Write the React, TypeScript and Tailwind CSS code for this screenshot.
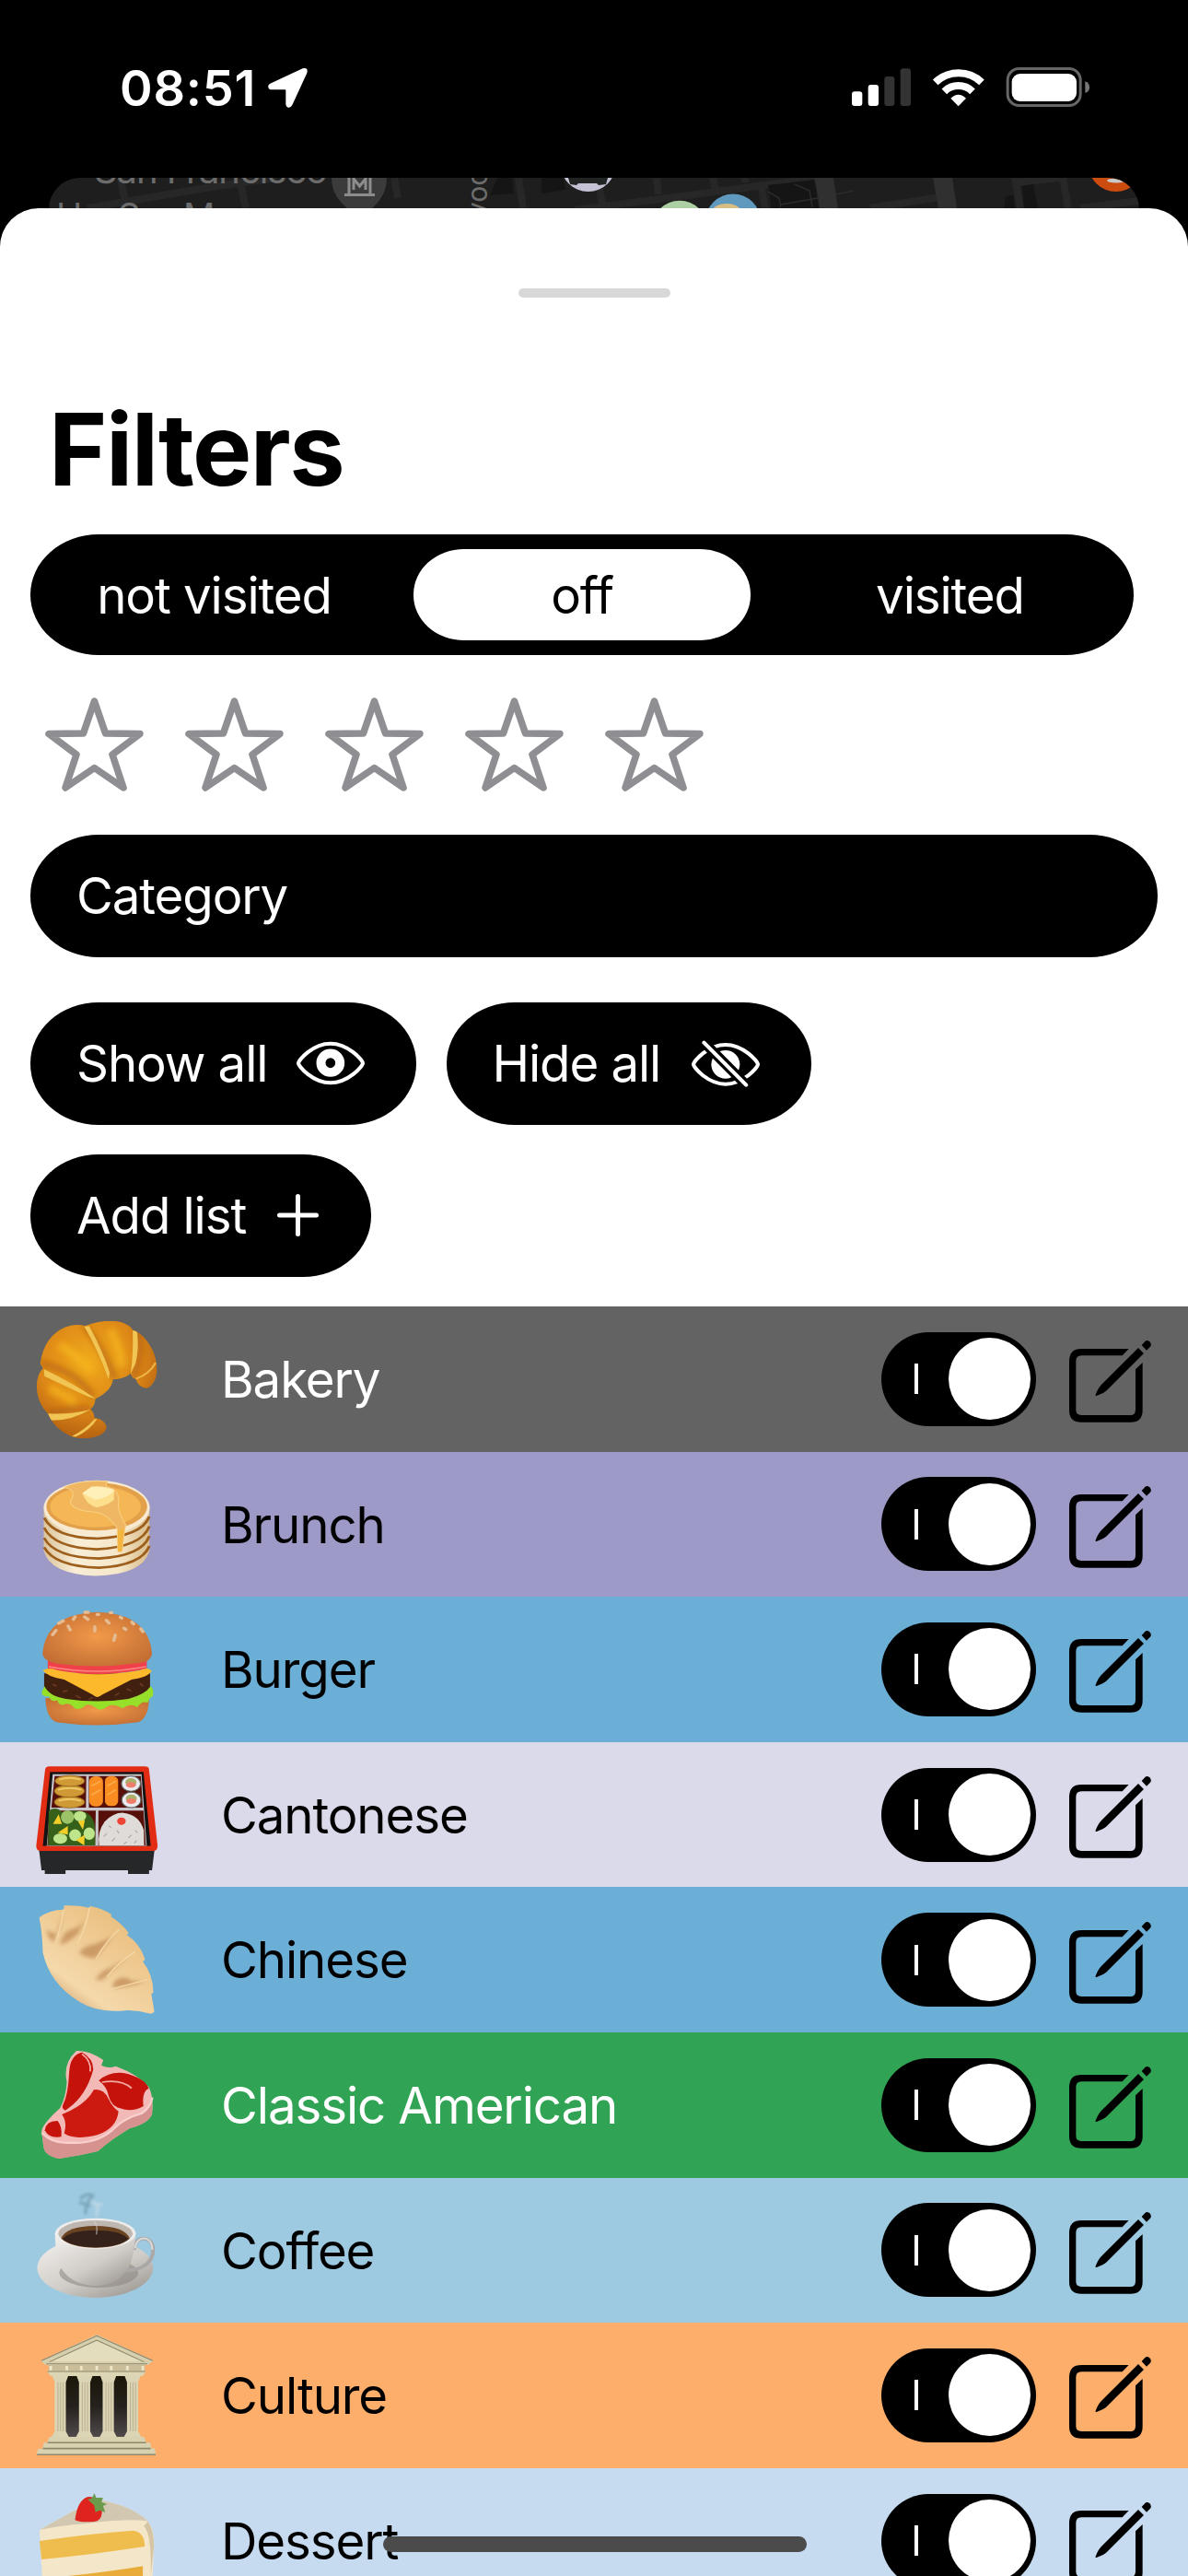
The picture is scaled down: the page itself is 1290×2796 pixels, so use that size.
import React, { useState } from 'react';

interface Category {
  name: string;
  row: string;
  icon: React.ReactNode;
}

const Glyph: React.FC<{ top: number; children: React.ReactNode }> = ({ top, children }) => (
  <svg className="w-[140px] h-full shrink-0" viewBox={`95 ${top} 392 473`} preserveAspectRatio="none">
    {children}
  </svg>
);

const Croissant = () => (
  <Glyph top={55}>
    <defs>
      <radialGradient id="crust" cx="0.45" cy="0.35" r="0.65">
        <stop offset="0" stopColor="#f0a91c" />
        <stop offset="0.6" stopColor="#dc8717" />
        <stop offset="1" stopColor="#b05c10" />
      </radialGradient>
      <filter id="crustSoft">
        <feGaussianBlur stdDeviation="9" />
      </filter>
      <clipPath id="crustClip">
        <path d="M122 240 Q135 150 200 122 Q230 110 258 118 Q320 95 368 106 Q395 115 404 132 Q440 145 465 200 Q478 235 477 268 Q472 310 448 321 Q422 322 413 292 Q402 290 397 274 Q375 292 343 293 Q340 330 290 356 Q288 380 275 390 Q287 404 287 418 Q318 422 324 448 Q318 480 260 485 Q235 486 215 478 Q165 455 145 404 Q112 370 111 310 Q114 275 130 257 Z" />
      </clipPath>
    </defs>
    <g clipPath="url(#crustClip)">
      <rect x="95" y="90" width="392" height="410" fill="url(#crust)" />
      <g filter="url(#crustSoft)" fill="none" strokeWidth="20">
        <path d="M122 240 Q230 262 283 350 M256 118 Q315 190 350 293 M145 400 Q220 390 275 385 M414 134 Q440 200 405 290" stroke="#ad5a0d" opacity="0.6" />
        <path d="M180 180 Q240 220 280 270 M335 130 Q365 190 370 250 M150 320 L230 365" stroke="#f8b820" opacity="0.7" strokeWidth="26" />
      </g>
      <g fill="#f0c553">
        <path d="M256 120 L271 119 Q312 200 333 270 L330 293 Q300 200 256 120Z" />
        <path d="M403 134 L416 134 Q424 190 412 240 L397 274 Q406 200 403 134Z" />
        <path d="M133 259 L135 282 Q210 320 270 350 L290 355 Q230 310 133 259Z" />
        <path d="M145 404 Q210 408 275 391 Q210 430 153 425Z" />
        <path d="M218 478 Q260 456 287 422 L295 422 Q272 460 230 480Z" />
      </g>
      <path d="M413 291 Q455 275 473 238" stroke="#eeb448" strokeWidth="6" fill="none" />
    </g>
  </Glyph>
);

const Pancakes = () => (
  <Glyph top={528}>
    <defs>
      <linearGradient id="stack" x1="0" y1="0" x2="1" y2="0">
        <stop offset="0" stopColor="#dcc59c" />
        <stop offset="0.3" stopColor="#f8edd6" />
        <stop offset="0.7" stopColor="#f5e7ca" />
        <stop offset="1" stopColor="#d9bd8d" />
      </linearGradient>
    </defs>
    <path d="M133 700 V850 Q150 925 290 932 Q435 928 454 850 V700Z" fill="url(#stack)" />
    <g fill="none" stroke="#9d5f1b" strokeWidth="8">
      <path d="M134 742 Q165 806 293 810 Q430 804 454 738" />
      <path d="M134 775 Q165 840 293 845 Q430 838 454 770" />
      <path d="M134 808 Q165 872 300 875 Q430 868 454 802" />
      <path d="M134 838 Q165 900 300 905 Q430 898 454 834" />
    </g>
    <ellipse cx="294" cy="710" rx="161" ry="90" fill="#f7ead0" />
    <ellipse cx="294" cy="706" rx="153" ry="78" fill="#e3a04a" />
    <ellipse cx="290" cy="706" rx="138" ry="67" fill="#f5b755" />
    <path d="M196 643 Q240 618 327 624 L322 638 Q365 655 360 690 Q355 720 382 765 L378 790 L371 850 Q362 858 358 850 L356 775 Q325 728 290 724 Q220 720 213 690 Q230 665 215 650Z" fill="#efb763" stroke="#f8cf83" strokeWidth="3" />
    <path d="M358 785 L377 775 L371 850 Q362 856 358 850Z" fill="#f3b640" />
    <path d="M250 662 L278 641 Q320 638 347 652 L346 684 Q330 700 293 709 Q262 698 250 662Z" fill="#fddf8e" />
    <path d="M250 662 L278 641 Q320 638 347 652 Q335 676 290 684Z" fill="#fff0b9" />
  </Glyph>
);

const Burger = () => (
  <Glyph top={1000}>
    <defs>
      <radialGradient id="bun" cx="0.5" cy="0.45" r="0.6">
        <stop offset="0" stopColor="#f19a4a" />
        <stop offset="1" stopColor="#c46e34" />
      </radialGradient>
    </defs>
    <path d="M138 1330 Q140 1400 175 1410 Q295 1428 420 1409 Q452 1395 453 1330Z" fill="url(#bun)" />
    <path d="M134 1250 H456 V1300 Q440 1340 295 1345 Q150 1340 134 1300Z" fill="#42200f" />
    <path d="M160 1285 L172 1292 M190 1310 L205 1306 M230 1322 L245 1330 M350 1322 L362 1314 M385 1300 L400 1308 M425 1282 L435 1292 M270 1335 L282 1328" stroke="#6b3a22" strokeWidth="5" />
    <path d="M135 1292 Q150 1325 200 1333 Q295 1348 390 1333 Q440 1320 458 1292 Q470 1305 464 1326 Q455 1326 449 1345 Q430 1338 417 1360 Q395 1345 372 1364 Q345 1348 327 1357 Q310 1372 297 1366 Q278 1350 263 1352 Q245 1370 228 1365 Q215 1347 200 1349 Q180 1360 174 1338 Q155 1345 148 1325 Q125 1328 127 1310Z" fill="#96e02a" />
    <path d="M145 1205 H446 V1235 Q295 1270 145 1235Z" fill="#f0404a" />
    <path d="M148 1228 Q295 1258 444 1228" stroke="#ff8583" strokeWidth="5" fill="none" />
    <path d="M130 1240 Q150 1228 175 1240 Q295 1265 425 1240 Q450 1228 461 1242 Q450 1262 400 1270 L310 1320 Q295 1334 282 1320 L195 1270 Q145 1262 130 1240Z" fill="#fbb92b" />
    <path d="M129 1185 Q140 1055 295 1050 Q452 1055 462 1185 Q458 1215 415 1217 Q295 1236 175 1218 Q132 1210 129 1185Z" fill="url(#bun)" />
    <g stroke="#e5bb92" strokeWidth="10" strokeLinecap="round">
      <path d="M178 1087 L192 1079 M160 1124 L170 1110 M207 1096 L213 1108 M223 1074 L228 1066 M257 1066 L267 1074 M288 1098 V1112 M323 1077 L331 1086 M350 1126 L346 1142 M377 1103 L382 1107 M401 1083 L406 1089 M428 1105 L434 1114 M258 1051 H268 M335 1052 H340 M366 1067 L370 1070 M295 1058 H300" />
    </g>
  </Glyph>
);

const Bento = () => (
  <Glyph top={33}>
    <path d="M118 380 H470 L462 450 H453 V462 H389 V450 H199 V462 H136 V450 H126Z" fill="#252728" />
    <path d="M150 112 H440 Q452 112 453 122 L479 370 Q478 387 468 387 H120 Q110 385 110 370 L137 122 Q139 112 150 112Z" fill="#e22d14" />
    <path d="M152 130 H436 L458 371 H130Z" fill="#141212" />
    <path d="M160 137 H430 L446 371 H142Z" fill="#c8c6cc" />
    <path d="M166 143 H262 L261 246 H156Z M270 143 H428 L434 246 H270Z M150 256 H291 L289 369 H144Z M299 256 H436 L443 369 H299Z" fill="#571009" />
    <g fill="#cf9a35" stroke="#8a5c16" strokeWidth="2">
      <ellipse cx="211" cy="228" rx="46" ry="19" />
      <ellipse cx="211" cy="192" rx="46" ry="20" />
      <ellipse cx="212" cy="159" rx="45" ry="18" />
    </g>
    <path d="M180 155 Q210 143 245 155 M176 188 Q210 176 248 188 M178 224 Q210 212 246 224" stroke="#edc869" strokeWidth="6" fill="none" />
    <rect x="271" y="144" width="42" height="98" rx="17" fill="#f98d22" />
    <rect x="319" y="143" width="40" height="98" rx="17" fill="#f98d22" />
    <path d="M278 175 L306 160 M278 205 L306 188 M326 175 L352 160 M326 205 L352 188" stroke="#ffb04e" strokeWidth="4" />
    <g fill="#eceaf0" stroke="#59675f" strokeWidth="3">
      <ellipse cx="398" cy="168" rx="29" ry="25" />
      <ellipse cx="399" cy="221" rx="29" ry="25" />
    </g>
    <ellipse cx="398" cy="163" rx="17" ry="13" fill="#a9b16b" />
    <ellipse cx="398" cy="172" rx="15" ry="9" fill="#ec7e6a" />
    <ellipse cx="399" cy="216" rx="17" ry="13" fill="#a9b16b" />
    <ellipse cx="399" cy="225" rx="15" ry="9" fill="#ec7e6a" />
    <path d="M148 256 Q170 240 190 262 Q220 250 262 262 Q290 280 289 320 L289 369 H146Z" fill="#36611b" />
    <g fill="#bfe58c">
      <ellipse cx="205" cy="277" rx="20" ry="22" fill="#9cc367" />
      <ellipse cx="243" cy="274" rx="19" ry="17" />
      <ellipse cx="228" cy="336" rx="18" ry="19" />
      <ellipse cx="271" cy="331" rx="17" ry="20" />
      <ellipse cx="183" cy="347" rx="21" ry="17" />
    </g>
    <path d="M161 299 L178 268 L188 299Z M175 328 L206 306 V334Z M237 291 L258 286 L252 318Z M231 352 L257 335 L256 369Z" fill="#f3ce28" />
    <path d="M301 369 Q295 325 318 292 Q345 262 375 263 Q425 270 437 320 L438 369Z" fill="#dedbd9" />
    <path d="M315 340 L325 330 M340 355 L350 345 M355 320 L362 330 M390 345 L400 335 M410 320 L418 328 M330 305 L338 312 M375 365 L385 358 M408 362 L415 353" stroke="#aaa7a7" strokeWidth="3" />
    <ellipse cx="369" cy="290" rx="13" ry="12" fill="#ee4435" />
  </Glyph>
);

const Dumpling = () => (
  <Glyph top={506}>
    <defs>
      <linearGradient id="dough" x1="0.1" y1="1" x2="0.8" y2="0.1">
        <stop offset="0" stopColor="#c08a52" />
        <stop offset="0.3" stopColor="#f5d9ab" />
        <stop offset="1" stopColor="#e9bd7d" />
      </linearGradient>
      <filter id="doughSoft">
        <feGaussianBlur stdDeviation="6" />
      </filter>
    </defs>
    <path d="M119 606 Q150 580 193 580 L195 567 Q235 565 272 574 L273 568 Q310 575 339 596 L337 603 Q370 625 391 656 L386 663 Q425 690 441 742 L434 750 Q465 790 466 850 L460 855 L469 912 Q465 920 455 919 Q420 907 385 908 Q300 920 240 880 Q150 820 130 720 Q128 650 119 606Z" fill="url(#dough)" />
    <g fill="#b9804c" opacity="0.65" filter="url(#doughSoft)">
      <path d="M190 595 Q178 630 165 685 Q145 680 140 640 Q155 665 180 650Z" />
      <path d="M265 600 Q250 630 236 660 Q205 690 182 695 Q190 655 215 645 Q245 640 265 600Z" />
      <path d="M345 665 Q315 700 292 738 Q260 740 240 720 Q260 695 290 692 Q320 680 345 665Z" />
      <path d="M400 730 Q355 760 322 800 Q305 815 290 808 Q305 780 335 770Z" />
      <path d="M440 815 Q400 830 345 836 Q335 820 360 805 Q385 795 400 812Z" />
    </g>
    <path d="M193 580 Q185 640 168 690 M272 574 Q262 635 236 690 M362 645 Q325 680 292 740 M410 718 Q360 750 325 800 M448 808 Q400 822 335 840" stroke="#f5d8a6" strokeWidth="4" fill="none" />
  </Glyph>
);

const Steak = () => (
  <Glyph top={978}>
    <path d="M232 1038 Q270 1035 314 1068 L308 1085 Q330 1098 352 1088 Q420 1115 452 1155 Q468 1190 462 1245 Q450 1275 395 1290 Q340 1325 297 1365 Q240 1380 180 1389 Q135 1380 132 1350 L126 1300 Q130 1275 182 1225 Q200 1190 203 1140 Q190 1080 232 1038Z" fill="#f2b9b6" />
    <path d="M127 1305 Q160 1340 215 1335 Q300 1340 350 1285 Q380 1255 430 1240 Q462 1215 462 1185 V1245 Q450 1275 395 1290 Q340 1325 297 1365 Q240 1380 180 1389 Q135 1380 132 1350Z" fill="#cb8581" opacity="0.75" />
    <path d="M127 1305 Q160 1342 215 1337 Q300 1342 350 1287 Q380 1257 430 1242 Q458 1222 463 1190" stroke="#f8cfcc" strokeWidth="7" fill="none" />
    <path d="M210 1110 Q212 1050 250 1043 Q285 1065 283 1100 Q260 1190 198 1232 Q185 1225 192 1212 Q207 1180 210 1110Z" fill="#c5130b" />
    <path d="M300 1135 Q330 1105 375 1110 Q440 1125 452 1160 Q430 1170 436 1218 Q400 1240 365 1225 Q340 1220 330 1185 Q325 1155 300 1135Z" fill="#c5130b" />
    <path d="M188 1245 Q260 1215 285 1165 Q315 1160 330 1195 Q340 1220 360 1235 Q355 1290 295 1312 Q225 1330 195 1307 Q205 1270 188 1245Z" fill="#cc1a10" />
    <path d="M136 1297 Q140 1265 175 1266 Q190 1285 186 1318 Q150 1325 136 1297Z" fill="#c5130b" />
    <path d="M249 1048 Q278 1070 274 1105 M310 1140 Q370 1130 400 1160" stroke="#f2aaa4" strokeWidth="5" fill="none" />
  </Glyph>
);

const Coffee = () => (
  <Glyph top={41}>
    <defs>
      <linearGradient id="cup" x1="0" y1="0" x2="0.8" y2="1">
        <stop offset="0" stopColor="#f2f0ee" />
        <stop offset="0.6" stopColor="#d1cdc8" />
        <stop offset="1" stopColor="#9e9993" />
      </linearGradient>
      <filter id="steam">
        <feGaussianBlur stdDeviation="4" />
      </filter>
    </defs>
    <g filter="url(#steam)" fill="none">
      <path d="M243 110 Q262 88 282 98 Q258 125 260 160 M240 120 L275 132" stroke="#6f98ac" strokeWidth="10" opacity="0.7" />
      <path d="M278 118 Q308 130 290 165 M285 125 L312 128" stroke="#c5dbe5" strokeWidth="8" opacity="0.8" />
    </g>
    <ellipse cx="289" cy="334" rx="176" ry="97" fill="url(#cup)" />
    <ellipse cx="300" cy="350" rx="120" ry="48" fill="#88837e" opacity="0.55" />
    <path d="M408 275 Q412 235 440 238 Q470 245 464 290 Q450 340 385 342" stroke="#a9a8a6" strokeWidth="11" fill="none" />
    <path d="M410 270 Q415 238 438 237 Q462 240 463 275" stroke="#dfdddb" strokeWidth="5" fill="none" />
    <path d="M167 220 Q168 320 200 355 Q235 392 290 392 Q350 390 380 350 Q408 315 412 220Z" fill="url(#cup)" />
    <ellipse cx="290" cy="222" rx="123" ry="50" fill="#efedeb" />
    <ellipse cx="290" cy="222" rx="113" ry="43" fill="#bdb7b0" />
    <path d="M186 238 Q200 198 290 197 Q380 198 394 238 Q365 267 290 268 Q215 267 186 238Z" fill="#6a4320" />
    <path d="M190 240 Q210 212 290 211 Q370 212 390 240 Q360 266 290 267 Q220 266 190 240Z" fill="#35221b" />
    <path d="M285 180 Q298 195 293 225" stroke="#d5d0ca" strokeWidth="4" fill="none" opacity="0.6" />
  </Glyph>
);

const Temple = () => (
  <Glyph top={514}>
    <defs>
      <linearGradient id="hall" x1="0" y1="0" x2="0" y2="1">
        <stop offset="0" stopColor="#1a1608" />
        <stop offset="0.5" stopColor="#25211d" />
        <stop offset="1" stopColor="#504a4c" />
      </linearGradient>
    </defs>
    <rect x="180" y="686" width="225" height="200" fill="url(#hall)" />
    <path d="M294 553 L466 638 L450 652 H138 L124 638Z" fill="#d6cfae" />
    <path d="M294 572 L430 640 H158Z" fill="#e3dcbd" />
    <path d="M126 638 L294 557 L464 638 M150 642 L294 571 L438 642" stroke="#8a8468" strokeWidth="3" fill="none" />
    <rect x="148" y="652" width="292" height="20" fill="#c9bd9a" />
    <path d="M154 655 V669 M203 655 V669 M247 655 V669 M294 655 V669 M338 655 V669 M387 655 V669 M434 655 V669" stroke="#eee7c8" strokeWidth="8" />
    <path d="M142 671 H444 L434 688 H154Z" fill="#ddd6b5" />
    <path d="M140 648 H448 M144 673 H442" stroke="#8a8468" strokeWidth="3" />
    {[183, 257, 329, 403].map((x) => (
      <g key={x}>
        <path d={`M${x - 24} 688 H${x + 24} L${x + 17} 708 V868 L${x + 26} 886 H${x - 26} L${x - 17} 868 V708Z`} fill="#dcd5b5" />
        <path d={`M${x - 7} 708 V868 M${x + 1} 708 V868 M${x + 9} 708 V868`} stroke="#b1aa88" strokeWidth="2.5" />
      </g>
    ))}
    <path d="M150 886 H438 L444 905 H456 L460 924 H470 L474 946 H110 L116 925 H128 L134 905 H143Z" fill="#d9d2b0" />
    <path d="M144 905 H444 M130 924 H458 M112 944 H473" stroke="#8d876b" strokeWidth="5" />
  </Glyph>
);

const Shortcake = () => (
  <Glyph top={987}>
    <path d="M120 1188 L225 1125 L310 1092 Q400 1110 450 1160 Q470 1190 468 1240 L458 1460 H134Z" fill="#f4e6c8" />
    <path d="M120 1188 L225 1125 L310 1092 Q400 1110 450 1160 Q400 1150 270 1166 Q170 1175 120 1188Z" fill="#d2c8b1" />
    <path d="M120 1224 Q270 1200 405 1190 Q440 1195 440 1242 Q270 1270 126 1284Z" fill="#efbd4d" />
    <path d="M130 1346 Q300 1330 434 1306 V1460 H135Z" fill="#e9ac39" />
    <path d="M437 1175 Q462 1200 458 1338 L468 1240 Q468 1190 450 1160Z" fill="#d5c5a5" />
    <path d="M228 1155 Q235 1090 268 1080 Q305 1080 310 1130 Q308 1160 285 1161 Q240 1165 228 1155Z" fill="#df241f" />
    <path d="M266 1088 L278 1086 L287 1069 L292 1083 L313 1083 L308 1097 L325 1104 L313 1110 L320 1131 L303 1124 L290 1130 L286 1108Z" fill="#6c9a4c" />
  </Glyph>
);

const categories: Category[] = [
  { name: 'Bakery', row: 'bg-[#636363] text-white', icon: <Croissant /> },
  { name: 'Brunch', row: 'bg-[#9e9ac8] text-black', icon: <Pancakes /> },
  { name: 'Burger', row: 'bg-[#6baed6] text-black', icon: <Burger /> },
  { name: 'Cantonese', row: 'bg-[#dadaeb] text-black', icon: <Bento /> },
  { name: 'Chinese', row: 'bg-[#6baed6] text-black', icon: <Dumpling /> },
  { name: 'Classic American', row: 'bg-[#31a354] text-white', icon: <Steak /> },
  { name: 'Coffee', row: 'bg-[#9ecae1] text-black', icon: <Coffee /> },
  { name: 'Culture', row: 'bg-[#fdae6b] text-black', icon: <Temple /> },
  { name: 'Dessert', row: 'bg-[#c6dbef] text-black', icon: <Shortcake /> },
];

const StatusBar = () => (
  <header className="h-[193px] shrink-0 flex justify-between pt-[73px] pl-[130px] pr-[107px] text-white">
    <div className="flex h-[45px]">
      <span className="w-[161px] text-[54px] leading-[45px] font-semibold tracking-[0.8px]">08:51</span>
      <svg className="w-[43px] h-[43px] mt-px" viewBox="753 43 129 129" fill="currentColor">
        <path d="M866 44 L760 93 Q752 97 754 105 Q756 113 765 113 H808 Q811 113 811 116 V160 Q812 171 821 171 Q828 171 832 163 L880 59 Q885 39 866 44Z" />
      </svg>
    </div>
    <svg className="w-[258px] h-[43px]" viewBox="106 39 774 129" fill="#fff">
      <rect x="106" y="118" width="34" height="47" rx="9" />
      <rect x="159" y="96" width="34" height="69" rx="9" />
      <rect x="212" y="69" width="33" height="96" rx="9" fill="#333" />
      <rect x="264" y="43" width="34" height="122" rx="9" fill="#333" />
      <path d="M378 88 A109 109 0 0 1 529 88 M407 118 A66 66 0 0 1 499 118" stroke="#fff" strokeWidth="24" fill="none" />
      <path d="M453 166 L428 140 Q453 116 478 140Z" />
      <rect x="613.500" y="43.500" width="237" height="120" rx="37" fill="none" stroke="#666" strokeWidth="9" />
      <rect x="627" y="60" width="211" height="90" rx="27" />
      <path d="M866 85 Q880 90 880 104 Q880 118 866 123Z" fill="#777" />
    </svg>
  </header>
);

// strip of the map that peeks out above the sheet
const MapPeek = () => (
  <div className="h-[72px] shrink-0 mx-[53px] -mb-[39.500px] rounded-t-[34px] overflow-hidden bg-[#1e1e1e]">
    <svg className="w-[1184px] h-[72px]" viewBox="53 193 1184 72" fontFamily="Inter, sans-serif">
      <g fill="none" stroke="#272727" strokeWidth="8">
        <path d="M95 226 L230 203 L300 193 M131 193 L136 220 M261 199 L267 226 M428 193 L432 215 M563 193 L568 226 M650 200 L655 226 M625 228 L860 197 L900 193 M713 193 L715 211 M774 193 L778 211 M809 193 V198 M827 205 L831 226 M945 226 L1020 214 M1102 193 L1108 226 M1105 198 L1150 193 M1154 193 L1160 226 M1173 226 L1237 218" />
      </g>
      <path d="M540 193 L556 193 L558 210 L532 212Z M588 193 H612 L614 206 L588 210Z M834 201 L884 195 L889 226 H838Z M1092 213 L1100 212 L1102 226 H1090Z M1110 202 L1122 200 L1127 226 H1112Z" fill="#151515" />
      <path d="M885 193 H905 L910 226 H890Z M1013 193 H1034 L1039 226 H1019Z" fill="#303030" />
      <path d="M834 208 L846 215 L848 225 M863 200 L879 207 L882 225 M848 222 L888 215 M908 211 L927 207" stroke="#2b2b2b" strokeWidth="1.500" fill="none" />
      <text x="102" y="198.500" fontSize="40" fill="#6c6c6c" textLength="254">San Francisco</text>
      <g fontSize="38" fill="#6c6c6c">
        <text x="61" y="248">H</text>
        <text x="128" y="248">S</text>
        <text x="199" y="248">M</text>
      </g>
      <path d="M360 193 Q360 212 377 226 H404 Q420 212 420 193Z" fill="#3b3b3b" />
      <path d="M374 211.500 H407 M379 193 V210 M402 193 V210 M384 206 V194 L390.500 202 L397 194 V206" stroke="#8c8c8c" strokeWidth="3" fill="none" />
      <text transform="translate(529 236) rotate(-90)" fontSize="30" fill="#6c6c6c">voo</text>
      <circle cx="638.700" cy="178" r="30" fill="#c4c2d4" />
      <path d="M617 193 H660 L658 200 L650 201 L648 199 H628 L626 201 L619 200Z" fill="#202422" />
      <circle cx="738" cy="247.700" r="30" fill="#acd0a4" />
      <circle cx="796" cy="240.500" r="30" fill="#6099be" />
      <ellipse cx="789" cy="229" rx="15" ry="8" fill="#d9bd82" />
      <circle cx="1211.700" cy="178" r="30" fill="#cc4b0e" />
      <ellipse cx="1212" cy="196" rx="10" ry="2.500" fill="#c9c9c9" />
    </svg>
  </div>
);

const Star = () => (
  <svg className="w-[107px] h-[102px]" viewBox="0 0 107 102" fill="none" stroke="#8e8e93" strokeWidth="7.500" strokeLinejoin="round">
    <path d="M53.500 4 L65.500 39 L103 39.500 L73 62 L85 98 L53.500 76.500 L22 98 L34 62 L4 39.500 L41.500 39Z" />
  </svg>
);

const EyeIcon = () => (
  <svg className="w-[74px] h-[48px]" viewBox="64 120 215 144" preserveAspectRatio="none" fill="none" stroke="#fff">
    <path d="M70 192 C70 182 115 128 171 128 C227 128 273 182 273 192 C273 202 227 256 171 256 C115 256 70 202 70 192Z" strokeWidth="12" />
    <ellipse cx="171" cy="191" rx="30" ry="31" strokeWidth="29" />
  </svg>
);

const EyeOffIcon = () => (
  <svg className="w-[74px] h-[51px]" viewBox="1309 116 215 153" preserveAspectRatio="none" fill="none" stroke="#fff">
    <path d="M1315 195 C1315 185 1360 131 1416 131 C1472 131 1518 185 1518 195 C1518 205 1472 259 1416 259 C1360 259 1315 205 1315 195Z" strokeWidth="12" />
    <ellipse cx="1416" cy="195" rx="45" ry="46" fill="#fff" stroke="none" />
    <path d="M1335 110 L1495 276" stroke="#000" strokeWidth="32" />
    <path d="M1348 124 L1481 262" strokeWidth="12" strokeLinecap="round" />
  </svg>
);

const PlusIcon = () => (
  <svg className="w-[45px] h-[46px]" viewBox="0 0 45 46" stroke="#fff" strokeWidth="5" strokeLinecap="round">
    <path d="M2.500 23 H42.500 M22.500 2.500 V43.500" />
  </svg>
);

const EditIcon = () => (
  <svg className="w-[89px] h-[89px]" viewBox="783 168 267 267">
    <path d="M977 195 H823 Q783 195 783 235 V395 Q783 434 823 434 H983 Q1022 434 1022 395 V240 L999 262 V393 Q999 411 983 411 H823 Q805 411 805 394 V235 Q805 217 823 217 H956Z" />
    <path d="M1008 192 L1026 210 L905 331 Q895 340 872 348 Q867 349 869 344 Q877 323 887 313Z" />
    <path d="M1019 183 L1030 171 Q1036 165 1045 172 Q1053 182 1047 188 L1035 200Z" />
  </svg>
);

const Toggle: React.FC<{ on: boolean; onClick: () => void }> = ({ on, onClick }) => (
  <button
    onClick={onClick}
    className={`w-[168px] h-[102px] rounded-full bg-black flex items-center justify-between pr-[6.500px] pl-[36px] ${on ? '' : 'flex-row-reverse'}`}
  >
    <span className="w-1 h-[33px] bg-white" />
    <span className="size-[89px] rounded-full bg-white" />
  </button>
);

const App: React.FC = () => {
  const [hidden, setHidden] = useState<Set<string>>(new Set());

  const toggle = (name: string) => {
    const next = new Set(hidden);
    if (next.has(name)) next.delete(name);
    else next.add(name);
    setHidden(next);
  };

  return (
    <div className="relative w-[1290px] h-[2796px] overflow-hidden flex flex-col bg-black font-['Inter',sans-serif]">
      <StatusBar />
      <MapPeek />
      <main className="relative flex-1 min-h-0 overflow-hidden flex flex-col rounded-t-[42px] bg-white text-[54.600px] leading-none tracking-[-1.1px]">
        <div className="w-[165px] h-[10px] shrink-0 mt-[87.500px] self-center rounded-full bg-[#d8d8d8]" />
        <h1 className="mt-[111px] ml-[53px] text-[108px] leading-[108px] font-bold tracking-[-1.500px]">Filters</h1>

        <div className="mt-[38px] ml-[33px] w-[1198px] h-[131px] shrink-0 flex items-center rounded-[74px/65.500px] bg-black text-white">
          <button className="w-[416px] pt-[2px] pr-[17px]">not visited</button>
          <button className="w-[366px] h-[98.500px] pt-[2px] rounded-[55px/49px] bg-white text-black">off</button>
          <button className="w-[416px] pt-[2px] pl-[17px]">visited</button>
        </div>

        <div className="mt-[46px] ml-[48.500px] flex gap-[45px]">
          {[1, 2, 3, 4, 5].map((n) => (
            <Star key={n} />
          ))}
        </div>

        <button className="mt-[47px] mx-[33px] h-[132.500px] shrink-0 pt-px pl-[50px] text-left rounded-[74px/66px] bg-black text-white">
          Category
        </button>

        <div className="mt-[49.500px] mb-[32.500px] px-[33px] flex flex-wrap gap-x-[33px] gap-y-[32.500px] text-white">
          <button className="w-[418.500px] h-[132.500px] pl-[50px] pr-[56px] flex items-center justify-between rounded-[74px/66px] bg-black">
            Show all <EyeIcon />
          </button>
          <button className="w-[396px] h-[132.500px] pl-[50px] pr-[56px] flex items-center justify-between rounded-[74px/66px] bg-black">
            Hide all <EyeOffIcon />
          </button>
          <button className="w-[369.500px] h-[132.500px] pl-[50px] pr-[57px] flex items-center justify-between rounded-[74px/66px] bg-black">
            Add list <PlusIcon />
          </button>
        </div>

        <ul>
          {categories.map(({ name, row, icon }) => (
            <li key={name} className={`h-[157.600px] flex items-center pl-[34px] pr-[40px] ${row}`}>
              {icon}
              <span className="ml-[66px] mt-px flex-1">{name}</span>
              <Toggle on={!hidden.has(name)} onClick={() => toggle(name)} />
              <button className="ml-[36px] mt-[6px]">
                <EditIcon />
              </button>
            </li>
          ))}
        </ul>
      </main>
      <div className="absolute left-[416px] top-[2753px] w-[460px] h-[17px] rounded-full bg-[#4b4b4b]" />
    </div>
  );
};

export default App;
